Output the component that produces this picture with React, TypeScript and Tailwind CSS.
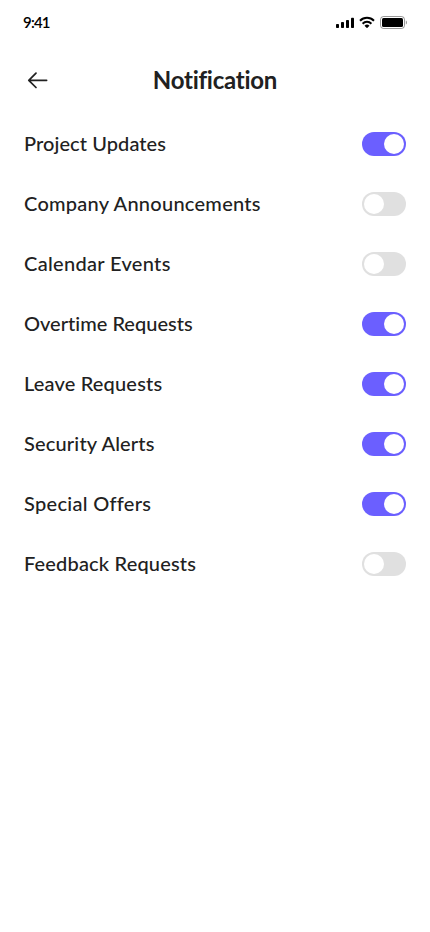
import { useState } from 'react';

type Setting = { label: string; on: boolean; tracking: string };

const initialSettings: Setting[] = [
  { label: 'Project Updates', on: true, tracking: 'tracking-[0.08px]' },
  { label: 'Company Announcements', on: false, tracking: 'tracking-[0.26px]' },
  { label: 'Calendar Events', on: false, tracking: 'tracking-[0.32px]' },
  { label: 'Overtime Requests', on: true, tracking: 'tracking-[0.01px]' },
  { label: 'Leave Requests', on: true, tracking: 'tracking-[0.17px]' },
  { label: 'Security Alerts', on: true, tracking: 'tracking-[0.17px]' },
  { label: 'Special Offers', on: true, tracking: 'tracking-[0.3px]' },
  { label: 'Feedback Requests', on: false, tracking: 'tracking-[0.17px]' },
];

function StatusBar() {
  return (
    <div className="flex h-11 items-center justify-between px-[23px]">
      <span className="-mt-px text-[15px] leading-5 font-semibold tracking-[-0.8px] text-black">9:41</span>
      <div className="flex items-center">
        <svg width="18" height="12" viewBox="0 0 18 12" fill="#000">
          <rect x="0" y="8" width="3" height="4" rx="0.8" />
          <rect x="5" y="6" width="3" height="6" rx="0.8" />
          <rect x="10" y="4" width="3" height="8" rx="0.8" />
          <rect x="15" y="1.7" width="3" height="10.3" rx="0.8" />
        </svg>
        <svg className="ml-[5px]" width="16" height="12" viewBox="0 0 16 12" fill="none" stroke="#000" strokeWidth="2">
          <path d="M1 4.700a10 10 0 0 1 14 0" />
          <path d="M3.600 7.700a6.200 6.200 0 0 1 8.800 0" />
          <path d="M8 12.200 5.500 9.700a3.600 3.600 0 0 1 5 0Z" fill="#000" stroke="none" />
        </svg>
        <svg className="ml-[5px]" width="27" height="13" viewBox="0 0 27 13" fill="none">
          <rect x="0.5" y="0.5" width="24" height="12" rx="3" stroke="#000" strokeOpacity="0.4" />
          <rect x="2" y="2" width="21" height="9" rx="1.5" fill="#000" />
          <path d="M25.8 4.5v4c.7-.3 1.2-1.1 1.2-2s-.5-1.700-1.200-2Z" fill="#000" fillOpacity="0.4" />
        </svg>
      </div>
    </div>
  );
}

export default function App() {
  const [settings, setSettings] = useState(initialSettings);
  const toggle = (index: number) =>
    setSettings(settings.map((s, i) => (i === index ? { ...s, on: !s.on } : s)));

  return (
    <main className="min-h-screen w-full bg-white font-['Lato',sans-serif] text-[#212121] [font-variant-ligatures:none]">
      <StatusBar />
      <header className="grid h-[72px] grid-cols-[28px_1fr_28px] items-center px-6">
        <button aria-label="Back" className="flex h-7 w-7 items-center justify-center">
          <svg width="28" height="28" viewBox="0 0 28 28" fill="none" stroke="#212121" strokeWidth="1.75" strokeLinecap="round" strokeLinejoin="round">
            <path d="M22.600 14.300H4.900M12 7.100 4.800 14.300l7.200 7.200" />
          </svg>
        </button>
        <h1 className="text-center text-2xl font-bold tracking-[-0.25px]">Notification</h1>
      </header>
      <ul className="flex flex-col gap-7 px-6 pt-3">
        {settings.map((s, i) => (
          <li key={s.label} className="flex h-8 items-center justify-between">
            <span className={`-mt-0.5 text-xl font-medium whitespace-nowrap ${s.tracking}`}>{s.label}</span>
            <button
              role="switch"
              aria-checked={s.on}
              aria-label={s.label}
              onClick={() => toggle(i)}
              className={`flex h-6 w-11 items-center rounded-full p-0.5 ${s.on ? 'justify-end bg-[#6b5fff]' : 'justify-start bg-[#e0e0e0]'}`}
            >
              <span className="h-5 w-5 rounded-full bg-white" />
            </button>
          </li>
        ))}
      </ul>
    </main>
  );
}
